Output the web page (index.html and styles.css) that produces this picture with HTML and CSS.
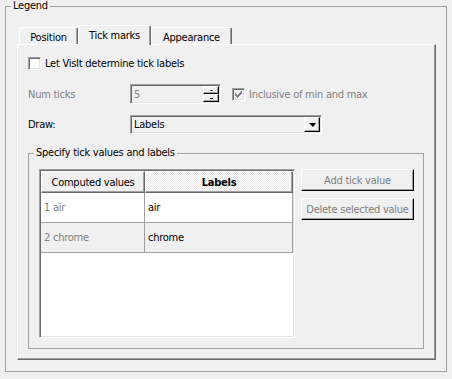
FILE: index.html
```html
<!DOCTYPE html>
<html lang="en">
  <head>
    <meta charset="UTF-8" />
    <meta name="viewport" content="width=device-width, initial-scale=1.0" />
    <title>Legend</title>
    <link rel="stylesheet" href="styles.css">
  </head>
  <body>
    <fieldset class="legend-box">
      <legend>Legend</legend>
      <div class="tab-bar">
        <div class="tab tab-position">Position</div>
        <div class="tab tab-ticks active">Tick marks</div>
        <div class="tab tab-appearance">Appearance</div>
      </div>
      <div class="tab-panel">
        <label class="check-row">
          <span class="checkbox"></span>
          <span>Let VisIt determine tick labels</span>
        </label>
        <div class="form-row spin-row">
          <span class="form-label disabled">Num ticks</span>
          <div class="spinbox">
            <span class="spin-value">5</span>
            <span class="spin-buttons">
              <span class="spin-btn up"></span>
              <span class="spin-btn down"></span>
            </span>
          </div>
          <label class="check-inline disabled">
            <span class="checkbox checked">
              <svg width="7" height="7" viewBox="0 0 7 7">
                <path d="M0 2h1v1h1v1h1v-1h1v-1h1v-1h1v-1h1v3h-1v1h-1v1h-1v1h-1v1h-1v-1h-1v-1h-1v-1h-1z" fill="#808080" />
              </svg>
            </span>
            <span>Inclusive of min and max</span>
          </label>
        </div>
        <div class="form-row draw-row">
          <span class="form-label">Draw:</span>
          <div class="combo">
            <span class="combo-value">Labels</span>
            <span class="combo-btn"><span class="arrow-down"></span></span>
          </div>
        </div>
        <fieldset class="ticks-group">
          <legend>Specify tick values and labels</legend>
          <div class="ticks-body">
            <div class="ticks-table">
              <div class="th">Computed values</div>
              <div class="th sorted">Labels</div>
              <div class="td muted">1 air</div>
              <div class="td">air</div>
              <div class="td muted alt">2 chrome</div>
              <div class="td alt">chrome</div>
            </div>
            <div class="side-buttons">
              <button type="button" disabled>Add tick value</button>
              <button type="button" disabled>Delete selected value</button>
            </div>
          </div>
        </fieldset>
      </div>
    </fieldset>
  </body>
</html>
```

FILE: styles.css
```css
body {
  margin: 0;
  background: #f0f0f0;
  font-family: "DejaVu Sans Condensed", "DejaVu Sans", sans-serif;
  font-size: 11px;
  letter-spacing: -0.25px;
  color: #000;
}

.legend-box {
  box-sizing: border-box;
  width: 442px;
  margin: 0 0 0 5px;
  padding: 13px 10px 11px 11px;
  border: 1px solid #a0a0a0;
  min-width: 0;
}

.legend-box > legend {
  padding: 0 2px;
  margin-left: -6px;
  line-height: 12px;
}

.tab-bar {
  display: flex;
  align-items: flex-end;
  height: 19px;
  padding-left: 2px;
}

.tab {
  box-sizing: border-box;
  height: 17px;
  padding-top: 3px;
  line-height: 13px;
  text-align: center;
  border: 1px solid #fff;
  border-bottom: 0;
  border-right-color: #696969;
  border-radius: 2px 2px 0 0;
  box-shadow: inset -1px 0 #a0a0a0;
}

.tab-position {
  width: 59px;
}

.tab-ticks {
  width: 73px;
}

.tab-appearance {
  width: 81px;
}

.tab.active {
  position: relative;
  z-index: 1;
  height: 20px;
  margin-bottom: -1px;
  padding-top: 3px;
  background: #f0f0f0;
}

.tab-panel {
  box-sizing: border-box;
  width: 419px;
  height: 316px;
  padding: 12px 10px 0 10px;
  border: 1px solid #fff;
  border-right-color: #696969;
  border-bottom-color: #696969;
  box-shadow: inset -1px -1px #a0a0a0;
}

.check-row,
.check-inline {
  display: flex;
  align-items: center;
  gap: 4px;
  height: 13px;
  line-height: 13px;
}

.checkbox {
  box-sizing: border-box;
  display: flex;
  align-items: center;
  justify-content: center;
  width: 13px;
  height: 13px;
  background: #fff;
  border: 1px solid;
  border-color: #a0a0a0 #fff #fff #a0a0a0;
  box-shadow: inset 1px 1px #696969, inset -1px -1px #e3e3e3;
}

.checkbox.checked {
  background: #f0f0f0;
}

.disabled {
  color: #808080;
}

.form-row {
  display: flex;
  align-items: center;
}

.spin-row {
  margin-top: 14px;
}

.draw-row {
  margin-top: 11px;
}

.form-label {
  width: 102px;
}

.spinbox,
.combo {
  box-sizing: border-box;
  display: flex;
  align-items: center;
  border: 1px solid;
  border-color: #a0a0a0 #fff #fff #a0a0a0;
  box-shadow: inset 1px 1px #696969, inset -1px -1px #e3e3e3;
}

.spinbox {
  width: 91px;
  height: 20px;
  margin-right: 11px;
}

.spin-value {
  padding-left: 3px;
  color: #808080;
}

.spin-buttons {
  display: flex;
  flex-direction: column;
  width: 16px;
  height: 16px;
  margin-left: auto;
  margin-right: 1px;
}

.spin-btn,
.combo-btn {
  box-sizing: border-box;
  display: flex;
  align-items: center;
  justify-content: center;
  border: 1px solid;
  border-color: #fff #000 #000 #fff;
  box-shadow: inset -1px -1px #a0a0a0;
  background: #f0f0f0;
}

.spin-btn {
  flex: 1;
}

.spin-btn::after {
  content: "";
  width: 3px;
  height: 1px;
  background: #000;
}

.spin-btn.up::after {
  height: 0;
  width: 1px;
  background: transparent;
  border-bottom: 1px solid #000;
  border-left: 1px solid transparent;
  border-right: 1px solid transparent;
}

.combo {
  width: 192px;
  height: 19px;
}

.combo-value {
  padding-left: 3px;
}

.combo-btn {
  width: 16px;
  height: 15px;
  margin-left: auto;
  margin-right: 1px;
}

.arrow-down {
  width: 0;
  height: 0;
  border-top: 4px solid #000;
  border-left: 4px solid transparent;
  border-right: 3px solid transparent;
}

.ticks-group {
  box-sizing: border-box;
  width: 396px;
  margin: 13px 0 0;
  padding: 10px;
  border: 1px solid #a0a0a0;
  min-width: 0;
}

.ticks-group > legend {
  padding: 0 2px;
  margin-left: -5px;
  line-height: 12px;
}

.ticks-body {
  display: flex;
  align-items: flex-start;
  gap: 6px;
}

.ticks-table {
  box-sizing: border-box;
  display: grid;
  grid-template-columns: 104px 148px;
  grid-template-rows: 22px 30px 30px;
  align-content: start;
  width: 256px;
  height: 169px;
  padding: 1px;
  background: #fff;
  border: 1px solid;
  border-color: #a0a0a0 #fff #fff #a0a0a0;
  box-shadow: inset 1px 1px #696969, inset -1px -1px #e3e3e3;
}

.th {
  box-sizing: border-box;
  display: flex;
  align-items: center;
  justify-content: center;
  background: #f0f0f0;
  border: 1px solid #fff;
  border-right-color: #696969;
  border-bottom-color: #696969;
  box-shadow: inset -1px -1px #a0a0a0;
}

.th.sorted {
  font-weight: bold;
  background: repeating-conic-gradient(#fff 0 25%, #e8e8e8 0 50%) 0 0 / 2px 2px;
}

.td {
  box-sizing: border-box;
  display: flex;
  align-items: center;
  padding-left: 3px;
  border-right: 1px solid #a0a0a0;
  border-bottom: 1px solid #a0a0a0;
}

.td.alt {
  background: #f0f0f0;
}

.td.muted {
  color: #808080;
}

.side-buttons {
  display: flex;
  flex-direction: column;
  gap: 7px;
}

.side-buttons button {
  box-sizing: border-box;
  width: 113px;
  height: 22px;
  padding: 0;
  font: inherit;
  letter-spacing: inherit;
  color: #808080;
  background: #f0f0f0;
  border: 1px solid;
  border-color: #fff #000 #000 #fff;
  box-shadow: inset -1px -1px #a0a0a0;
}
```
